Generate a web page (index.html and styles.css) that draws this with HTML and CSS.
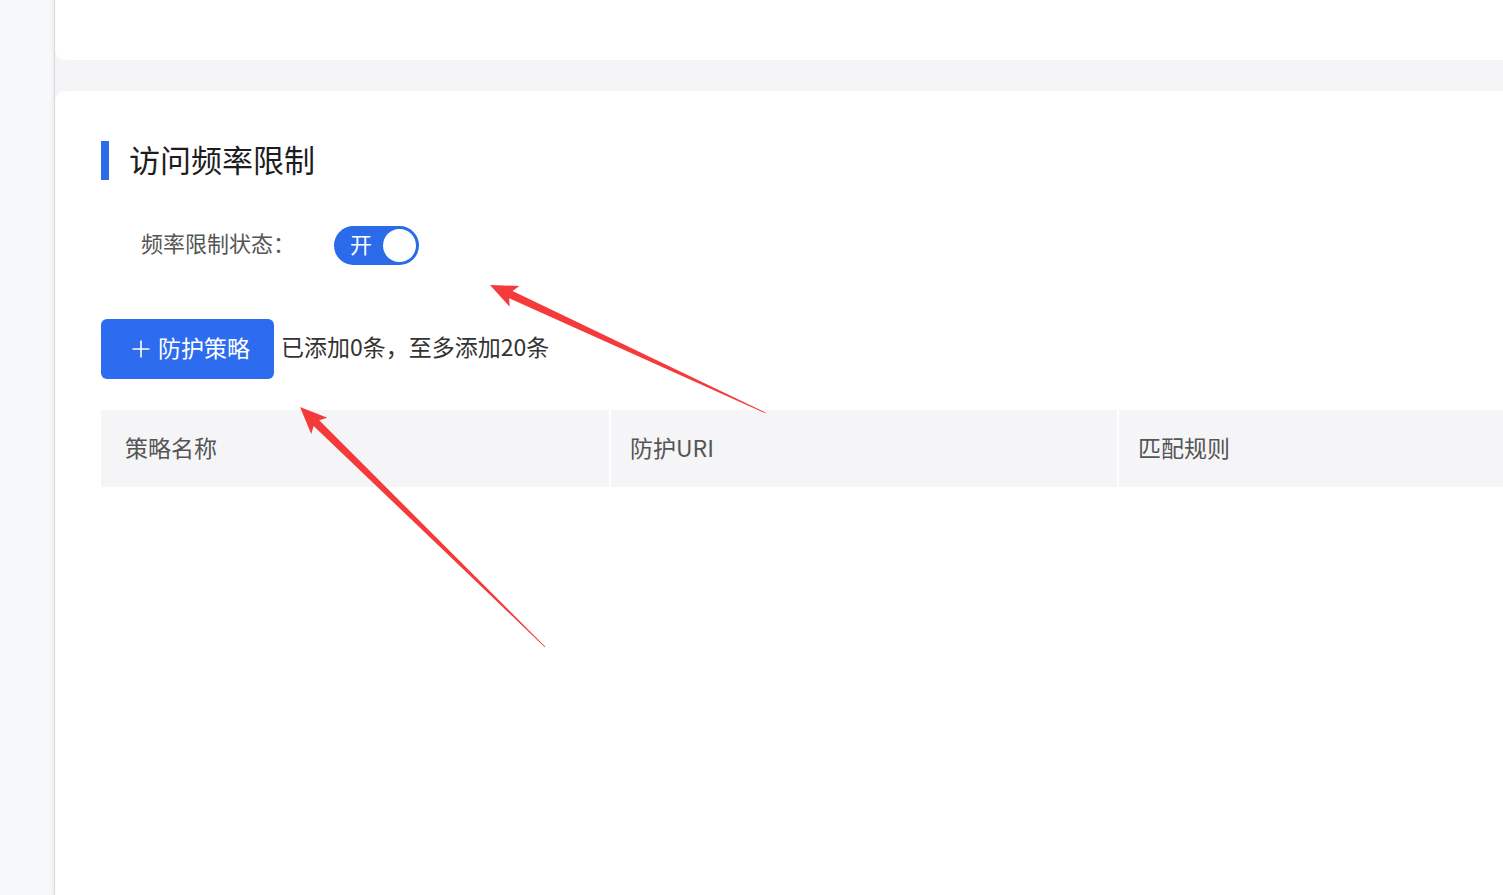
FILE: index.html
```html
<!DOCTYPE html>
<html lang="zh-CN">
<head>
<meta charset="utf-8">
<title>访问频率限制</title>
<link rel="stylesheet" href="styles.css">
</head>
<body>
<div class="layout">
  <aside class="sidebar"></aside>
  <main class="main">
    <section class="card-top"></section>
    <section class="card">
      <div class="title-row">
        <span class="title-bar"></span>
        <h2 class="title">访问频率限制</h2>
      </div>
      <div class="status-row">
        <span class="status-label">频率限制状态：</span>
        <span class="switch">
          <span class="switch-text">开</span>
          <span class="switch-knob"></span>
        </span>
      </div>
      <div class="action-row">
        <button class="btn-add" type="button">
          <svg class="plus" width="20" height="20" viewBox="0 0 20 20"><path d="M10 1.5V18.5M1.5 10H18.5" stroke="#fff" stroke-width="1.6" fill="none"/></svg>
          <span class="btn-text">防护策略</span>
        </button>
        <span class="hint">已添加0条，至多添加20条</span>
      </div>
      <div class="table-head">
        <div class="th th-first">策略名称</div>
        <div class="th">防护URI</div>
        <div class="th th-last">匹配规则</div>
      </div>
    </section>
  </main>
</div>
<svg class="arrows" width="1503" height="895" viewBox="0 0 1503 895">
  <g transform="translate(490 285) rotate(24.9)">
    <polygon points="0,0 27,-11.5 23,-4 304,-0.4 304,0.4 23,4 27,11.5" fill="#f43a3a"/>
  </g>
  <g transform="translate(300 407) rotate(44.4)">
    <polygon points="0,0 27,-11.5 23,-4 343,-0.4 343,0.4 23,4 27,11.5" fill="#f43a3a"/>
  </g>
</svg>
</body>
</html>
```
FILE: styles.css
```css
html, body {
  margin: 0;
  padding: 0;
}
body {
  width: 1503px;
  height: 895px;
  overflow: hidden;
  position: relative;
  font-family: "Noto Sans CJK SC", "Noto Sans", sans-serif;
  background: #f5f5f7;
}
.layout {
  display: flex;
  height: 895px;
}
.sidebar {
  width: 54px;
  flex: none;
  background: #f7f8fa;
  border-right: 1px solid #d9d9dc;
  box-shadow: inset -4px 0 4px -3px rgba(0, 0, 0, 0.06);
}
.main {
  flex: 1;
  display: flex;
  flex-direction: column;
  gap: 31px;
  background: #f5f5f7;
  min-width: 0;
}
.card-top {
  height: 60px;
  flex: none;
  background: #fff;
  border-bottom-left-radius: 10px;
}
.card {
  flex: 1;
  background: #fff;
  border-top-left-radius: 10px;
  padding: 50px 0 0 46px;
}
.title-row {
  display: flex;
  align-items: center;
  height: 39px;
}
.title-bar {
  width: 8px;
  height: 39px;
  background: #2d6be8;
}
.title {
  margin: 0 0 0 20px;
  padding-bottom: 5px;
  font-size: 31px;
  font-weight: 400;
  color: #1d1d1f;
  line-height: 39px;
}
.status-row {
  display: flex;
  align-items: center;
  margin-top: 46px;
  height: 39px;
  padding-left: 40px;
}
.status-label {
  width: 193px;
  padding-bottom: 7px;
  font-size: 22px;
  color: #555;
}
.switch {
  position: relative;
  width: 85px;
  height: 39px;
  border-radius: 20px;
  background: #2b6ae8;
  display: flex;
  align-items: center;
}
.switch-text {
  margin-left: 16px;
  padding-bottom: 5px;
  font-size: 22px;
  color: #fff;
  line-height: 1;
}
.switch-knob {
  position: absolute;
  right: 3px;
  top: 3px;
  width: 33px;
  height: 33px;
  border-radius: 50%;
  background: #fff;
}
.action-row {
  display: flex;
  align-items: center;
  margin-top: 54px;
}
.btn-add {
  width: 173px;
  height: 60px;
  border: none;
  border-radius: 6px;
  background: #2d6bef;
  color: #fff;
  font-family: inherit;
  font-size: 23px;
  display: flex;
  align-items: center;
  padding: 0 0 0 30px;
  gap: 7px;
}
.btn-text {
  padding-bottom: 4px;
}
.plus {
  flex: none;
}
.hint {
  margin-left: 7px;
  padding-bottom: 6px;
  font-size: 23px;
  color: #333;
}
.table-head {
  display: flex;
  margin-top: 31px;
  height: 77px;
  background: #f5f5f7;
}
.th {
  display: flex;
  align-items: center;
  width: 487px;
  padding-left: 19px;
  padding-bottom: 4px;
  border-left: 2px solid #fff;
  font-size: 23px;
  color: #555;
}
.th-first {
  width: 484px;
  padding-left: 24px;
  border-left: none;
}
.th-last {
  flex: 1;
  width: auto;
}
.arrows {
  position: absolute;
  left: 0;
  top: 0;
  pointer-events: none;
}
```
